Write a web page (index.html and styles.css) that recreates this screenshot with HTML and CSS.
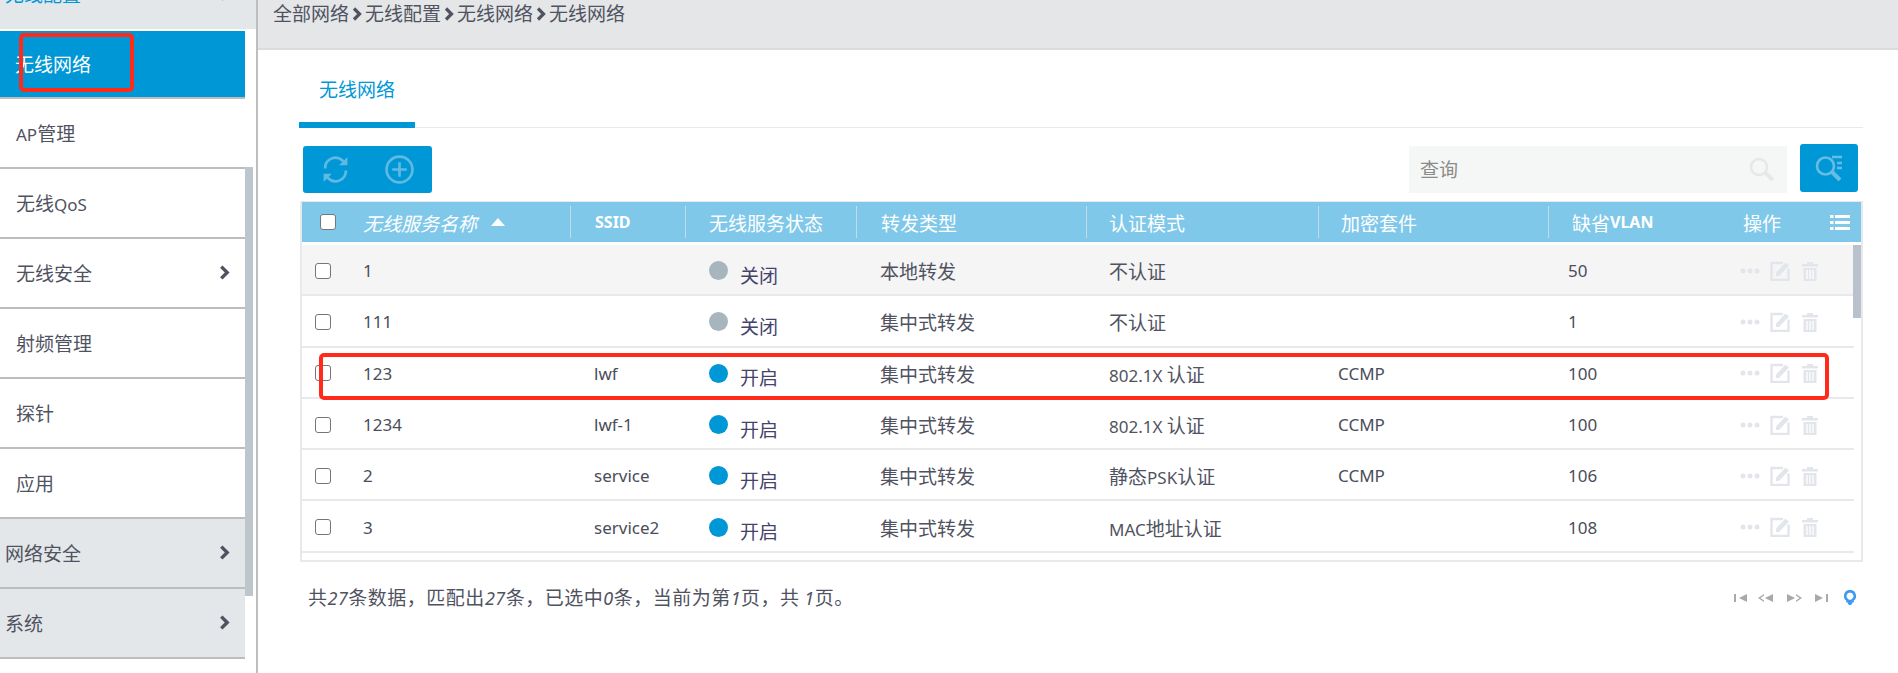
FILE: index.html
```html
<!DOCTYPE html>
<html lang="zh-CN">
<head>
<meta charset="utf-8">
<title>无线网络</title>
<link rel="stylesheet" href="styles.css">
</head>
<body>
<svg class="defs" width="0" height="0" aria-hidden="true">
  <symbol id="chev" viewBox="0 0 10 14"><path d="M2 1.5 7.5 7 2 12.5" fill="none" stroke="currentColor" stroke-width="3.2"/></symbol>
  <symbol id="edit" viewBox="0 0 20 20"><path d="M13 2H1.5v17h17V7.500" fill="none" stroke="currentColor" stroke-width="2.400"/><path d="M6 11.500 15.500 1.500 19 4.500 9 15H6z" fill="currentColor"/></symbol>
  <symbol id="trash" viewBox="0 0 16 20"><path d="M0 3h5V1h6v2h5v2.500H0zM1.500 7h13v13h-13z" fill="currentColor"/><path d="M5 9v9M8 9v9M11 9v9" stroke="#fff" stroke-width="1.300"/></symbol>
  <symbol id="dots" viewBox="0 0 20 6"><circle cx="3" cy="3" r="2.500" fill="currentColor"/><circle cx="10" cy="3" r="2.500" fill="currentColor"/><circle cx="17" cy="3" r="2.500" fill="currentColor"/></symbol>
</svg>
<div class="app">
  <aside class="side">
    <ul class="nav">
      <li class="item top cur"><span>无线配置</span><svg class="chev"><use href="#chev"/></svg></li>
      <li class="item sub active"><span>无线网络</span></li>
      <li class="item sub"><span><span class="lat">AP</span>管理</span></li>
      <li class="item sub"><span>无线<span class="lat">QoS</span></span></li>
      <li class="item sub"><span>无线安全</span><svg class="chev"><use href="#chev"/></svg></li>
      <li class="item sub"><span>射频管理</span></li>
      <li class="item sub"><span>探针</span></li>
      <li class="item sub"><span>应用</span></li>
      <li class="item top"><span>网络安全</span><svg class="chev"><use href="#chev"/></svg></li>
      <li class="item top"><span>系统</span><svg class="chev"><use href="#chev"/></svg></li>
    </ul>
    <div class="side-thumb"></div>
  </aside>
  <main class="main">
    <nav class="crumbs">
      <span>全部网络</span><svg class="sep"><use href="#chev"/></svg>
      <span>无线配置</span><svg class="sep"><use href="#chev"/></svg>
      <span>无线网络</span><svg class="sep"><use href="#chev"/></svg>
      <span>无线网络</span>
    </nav>
    <section class="content">
      <div class="tabs"><div class="tab">无线网络</div></div>
      <div class="toolbar">
        <div class="btns">
          <svg class="ic" viewBox="1 0 24 28"><path d="M3 13a10 10 0 0 1 17-7.500l3 3M23 15a10 10 0 0 1-17 7.500l-3-3" fill="none" stroke="currentColor" stroke-width="2.600"/><path d="M24.500 2v8h-8zM1.500 26v-8h8z" fill="currentColor"/></svg>
          <svg class="ic" viewBox="0 0 28 28"><circle cx="14" cy="14" r="12.500" fill="none" stroke="currentColor" stroke-width="2.600"/><path d="M14 7v14M7 14h14" stroke="currentColor" stroke-width="2.600"/></svg>
        </div>
        <div class="tools">
          <div class="search"><span>查询</span>
            <svg class="s-ic" viewBox="0 0 26 24"><circle cx="10" cy="10" r="8" fill="none" stroke="currentColor" stroke-width="2.600"/><path d="M16 15.500 24 23" stroke="currentColor" stroke-width="4"/></svg>
          </div>
          <div class="adv">
            <svg class="a-ic" viewBox="0 0 28 26"><circle cx="10.500" cy="11" r="8.500" fill="none" stroke="currentColor" stroke-width="2.600"/><path d="M17 17 25 25" stroke="currentColor" stroke-width="4"/><path d="M17 2h10M22 8h5M22 13h5" stroke="currentColor" stroke-width="2.400"/></svg>
          </div>
        </div>
      </div>
      <div class="grid">
        <div class="head cols">
          <div class="c0"><input type="checkbox" class="cb" aria-label="全选"></div>
          <div class="h name"><em>无线服务名称</em><i class="tri"></i></div>
          <div class="h"><b class="lat">SSID</b></div>
          <div class="h tight">无线服务状态</div>
          <div class="h">转发类型</div>
          <div class="h tighter">认证模式</div>
          <div class="h tighter">加密套件</div>
          <div class="h tight">缺省<b class="lat">VLAN</b></div>
          <div class="h last">操作<svg class="list" viewBox="0 0 20 15"><path d="M0 0h3.500v3H0zM0 6h3.500v3H0zM0 12h3.500v3H0zM5 0h15v3H5zM5 6h15v3H5zM5 12h15v3H5z" fill="currentColor"/></svg></div>
        </div>
        <div class="body">
          <div class="row cols odd">
            <div class="c0"><input type="checkbox" class="cb" aria-label="选择"></div>
            <div class="td name lat">1</div><div class="td lat"></div>
            <div class="td st"><i class="dot off"></i><span>关闭</span></div>
            <div class="td">本地转发</div><div class="td a">不认证</div><div class="td b"></div><div class="td b lat">50</div>
            <div class="td ops"><svg class="d"><use href="#dots"/></svg><svg class="e"><use href="#edit"/></svg><svg class="t"><use href="#trash"/></svg></div>
          </div>
          <div class="row cols">
            <div class="c0"><input type="checkbox" class="cb" aria-label="选择"></div>
            <div class="td name lat">111</div><div class="td lat"></div>
            <div class="td st"><i class="dot off"></i><span>关闭</span></div>
            <div class="td">集中式转发</div><div class="td a">不认证</div><div class="td b"></div><div class="td b lat">1</div>
            <div class="td ops"><svg class="d"><use href="#dots"/></svg><svg class="e"><use href="#edit"/></svg><svg class="t"><use href="#trash"/></svg></div>
          </div>
          <div class="row cols">
            <div class="c0"><input type="checkbox" class="cb" aria-label="选择"></div>
            <div class="td name lat">123</div><div class="td lat">lwf</div>
            <div class="td st"><i class="dot on"></i><span>开启</span></div>
            <div class="td">集中式转发</div><div class="td a"><span class="lat">802.1X </span>认证</div><div class="td b lat">CCMP</div><div class="td b lat">100</div>
            <div class="td ops"><svg class="d"><use href="#dots"/></svg><svg class="e"><use href="#edit"/></svg><svg class="t"><use href="#trash"/></svg></div>
          </div>
          <div class="row cols">
            <div class="c0"><input type="checkbox" class="cb" aria-label="选择"></div>
            <div class="td name lat">1234</div><div class="td lat">lwf-1</div>
            <div class="td st"><i class="dot on"></i><span>开启</span></div>
            <div class="td">集中式转发</div><div class="td a"><span class="lat">802.1X </span>认证</div><div class="td b lat">CCMP</div><div class="td b lat">100</div>
            <div class="td ops"><svg class="d"><use href="#dots"/></svg><svg class="e"><use href="#edit"/></svg><svg class="t"><use href="#trash"/></svg></div>
          </div>
          <div class="row cols">
            <div class="c0"><input type="checkbox" class="cb" aria-label="选择"></div>
            <div class="td name lat">2</div><div class="td lat">service</div>
            <div class="td st"><i class="dot on"></i><span>开启</span></div>
            <div class="td">集中式转发</div><div class="td a">静态<span class="lat">PSK</span>认证</div><div class="td b lat">CCMP</div><div class="td b lat">106</div>
            <div class="td ops"><svg class="d"><use href="#dots"/></svg><svg class="e"><use href="#edit"/></svg><svg class="t"><use href="#trash"/></svg></div>
          </div>
          <div class="row cols">
            <div class="c0"><input type="checkbox" class="cb" aria-label="选择"></div>
            <div class="td name lat">3</div><div class="td lat">service2</div>
            <div class="td st"><i class="dot on"></i><span>开启</span></div>
            <div class="td">集中式转发</div><div class="td a"><span class="lat">MAC</span>地址认证</div><div class="td b"></div><div class="td b lat">108</div>
            <div class="td ops"><svg class="d"><use href="#dots"/></svg><svg class="e"><use href="#edit"/></svg><svg class="t"><use href="#trash"/></svg></div>
          </div>
          <div class="grid-thumb"></div>
        </div>
      </div>
      <div class="foot">
        <div class="summary">共<em class="lat">27</em>条数据，匹配出<em class="lat">27</em>条，已选中<em class="lat">0</em>条，当前为第<em class="lat">1</em>页，共 <em class="lat">1</em>页。</div>
        <div class="pager">
          <svg class="pg first" viewBox="0 0 13 8"><path d="M0 0h2v8H0zM13 0v8L5 4z" fill="currentColor"/></svg>
          <svg class="pg wide" viewBox="0 0 15 8"><path d="M6 0v1.500L2.500 4 6 6.500V8L0 4zM15 0v8L7 4z" fill="currentColor"/></svg>
          <svg class="pg wide" viewBox="0 0 15 8"><path d="M0 0v8l8-4zM9 0v1.500L12.500 4 9 6.500V8l6-4z" fill="currentColor"/></svg>
          <svg class="pg last" viewBox="0 0 13 8"><path d="M0 0v8l8-4zM11 0h2v8h-2z" fill="currentColor"/></svg>
          <svg class="bulb" viewBox="0 0 12 15"><path d="M6 1.200a4.800 4.800 0 0 1 2.600 8.800v1H3.400v-1A4.800 4.800 0 0 1 6 1.200z" fill="none" stroke="currentColor" stroke-width="2.600"/><path d="M3.500 11h5v2l-1.500 2H5l-1.500-2z" fill="currentColor"/></svg>
        </div>
      </div>
    </section>
  </main>
</div>
<div class="mark mark-nav"></div>
<div class="mark mark-row"></div>
</body>
</html>
```
FILE: styles.css
```css
* { box-sizing: border-box; }
html, body { margin: 0; height: 673px; overflow: hidden; background: #fff; }
body {
  position: relative;
  font-family: "Noto Sans CJK SC", "Noto Sans", sans-serif;
  font-size: 19px;
  color: #50535f;
}
.defs { position: absolute; }
.lat { font-family: "Noto Sans", "Noto Sans CJK SC", sans-serif; font-size: 17px; }
.app { display: flex; height: 673px; }

/* sidebar */
.side { position: relative; width: 258px; flex: none; border-right: 2px solid #bcbfc2; overflow: hidden; }
.nav { list-style: none; margin: -41px 0 0; padding: 0; width: 245px; }
.item { display: flex; align-items: center; justify-content: space-between; height: 70px; border-bottom: 2px solid #bbbdbf; padding: 0 15px 2px 0; }
.item.top { background: #e4e7e9; padding-left: 5px; }
.item.sub { background: #fff; padding-left: 16px; }
.item.cur { color: #0097d7; border-bottom: 0; height: 70px; box-shadow: 12px 0 0 #e4e7e9; }
.item.active { background: #0097d7; color: #fff; height: 68px; margin-top: 2px; padding-left: 15px; }
.chev { width: 11px; height: 15px; color: #50535f; }
.cur .chev { color: #0097d7; }
.side-thumb { position: absolute; left: 245px; top: 167px; width: 8px; height: 429px; background: #bdc5cd; }

/* main */
.main { flex: 1; min-width: 0; }
.crumbs { display: flex; align-items: flex-start; gap: 3px; height: 50px; padding: 0 0 0 15px; line-height: 26px; background: #e4e6e8; border-bottom: 2px solid #d9dbdd; }
.sep { width: 10px; height: 14px; margin-top: 7px; color: #50535f; }
.content { padding: 0 35px 0 41px; }
.tabs { height: 78px; border-bottom: 1px solid #e8e9ea; }
.tab { width: 116px; height: 78px; padding-top: 27px; text-align: center; line-height: 24px; color: #0097d7; border-bottom: 6px solid #0097d7; }

.toolbar { display: flex; justify-content: space-between; align-items: flex-start; height: 48px; margin-top: 18px; padding: 0 5px 0 4px; }
.btns { display: flex; align-items: center; gap: 35px; width: 129px; height: 47px; padding-left: 18px; background: #0097d7; border-radius: 3px; color: #5fb9e3; }
.ic { width: 29px; height: 29px; }
.tools { display: flex; gap: 13px; align-items: flex-start; }
.search { display: flex; justify-content: space-between; align-items: center; width: 378px; height: 47px; padding: 0 12px 2px 11px; background: #f5f7f6; color: #8b8b88; }
.s-ic { width: 26px; height: 24px; color: #e6e8e8; }
.adv { display: flex; align-items: center; justify-content: center; width: 58px; height: 48px; margin-top: -2px; background: #0097d7; border-radius: 3px; color: #67bce4; }
.a-ic { width: 28px; height: 26px; }

/* grid */
.grid { margin: 7px 0 0 1px; height: 361px; border: 2px solid #e8e9ea; border-top-width: 1px; width: 1563px; }
.cols { display: grid; grid-template-columns: 61px 207px 115px 171px 230px 232px 230px 174px 1fr; align-items: center; }
.head { height: 40px; background: #7fc8ea; color: #fff; }
.c0 { display: flex; align-items: center; padding-left: 13px; }
.head .c0 { padding-left: 18px; }
.cb { appearance: none; width: 16px; height: 16px; margin: 0; background: #fff; border: 1.500px solid #767676; border-radius: 3px; }
.h { display: flex; align-items: center; height: 32px; padding-left: 24px; border-left: 1px solid #c5dce6; }
.h.tight { padding-left: 23px; }
.h.tighter { padding-left: 22px; }
.h .lat { font-weight: 700; font-size: 16px; }
.h.name { padding-left: 0; border-left: 0; }
.h.name em { font-style: italic; }
.tri { width: 0; height: 0; margin-left: 14px; border: 7px solid transparent; border-top: 0; border-bottom: 8px solid #fff; }
.h.last { padding-left: 21px; border-left: 0; justify-content: space-between; padding-right: 11px; }
.list { width: 20px; height: 15px; }

.body { position: relative; margin-top: 3px; height: 308px; }
.row { width: 1552px; height: 51.300px; padding-top: 2px; border-bottom: 2px solid #e8e9ea; }
.row.odd { background: #f5f5f5; }
.td { padding-left: 24px; white-space: nowrap; }
.td.name { padding-left: 0; }
.td.a { padding-left: 23px; }
.td.b { padding-left: 20px; }
.td.lat { color: #4a4d5a; }
.st { display: flex; align-items: center; gap: 12px; color: #45436c; }
.st span { padding-top: 8px; line-height: 26px; }
.dot { flex: none; width: 19px; height: 19px; border-radius: 50%; }
.dot.off { background: #a7b5bf; }
.dot.on { background: #0097d7; }
.ops { display: flex; align-items: center; padding-left: 18px; color: #e2e6eb; }
.ops .d { width: 20px; height: 6px; }
.ops .e { width: 20px; height: 20px; margin-left: 10px; }
.ops .t { width: 16px; height: 20px; margin-left: 12px; }
.grid-thumb { position: absolute; right: 0; top: 0; width: 8px; height: 73px; background: #b9c1cc; }

.foot { display: flex; justify-content: space-between; align-items: center; margin-top: 22px; padding: 0 7px 0 9px; }
.summary { line-height: 26px; color: #50535f; letter-spacing: .5px; }
.summary .lat { font-size: 18px; }
.pager { display: flex; align-items: center; color: #a9a9a9; }
.pg { height: 8px; }
.pg.first, .pg.last { width: 13px; }
.pg.wide { width: 15px; margin-left: 11px; }
.pg.wide + .pg.wide { margin-left: 14px; }
.pg.last { margin-left: 13px; }
.bulb { width: 12px; height: 15px; margin-left: 16px; color: #3d9bef; }

/* red annotation boxes drawn over the screenshot */
.mark { position: absolute; border: 4px solid #ff2a1a; border-radius: 5px; }
.mark-nav { left: 19px; top: 33px; width: 115px; height: 59px; }
.mark-row { left: 319px; top: 353px; width: 1510px; height: 47px; }
```
